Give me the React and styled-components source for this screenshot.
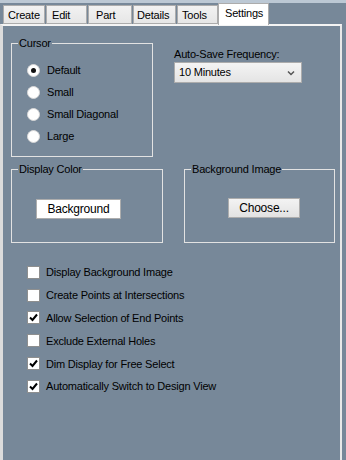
import styled, { createGlobalStyle } from "styled-components";

const GlobalStyle = createGlobalStyle`
  html, body {
    margin: 0;
    padding: 0;
    background: #778899;
    font-family: "Liberation Sans", Arial, sans-serif;
    font-size: 11px;
    letter-spacing: -0.2px;
    color: #000;
  }
`;

const Window = styled.div`
  width: 346px;
  height: 460px;
  overflow: hidden;
  border-top: 3px solid #bcc8d4;
  box-sizing: border-box;
  display: flex;
  flex-direction: column;
`;

const TabStrip = styled.div`
  display: flex;
  align-items: flex-end;
  height: 21px;
  padding-left: 3px;
  position: relative;
  z-index: 1;
`;

const Tab = styled.div`
  box-sizing: border-box;
  width: ${(p) => p.w}px;
  height: ${(p) => (p.active ? 22 : 19)}px;
  margin-right: ${(p) => p.gap ?? 1}px;
  margin-bottom: ${(p) => (p.active ? -1 : 0)}px;
  padding-left: ${(p) => p.pad}px;
  padding-top: 3px;
  border: 1px solid #acacac;
  border-bottom: ${(p) => (p.active ? "none" : "1px solid #acacac")};
  background: ${(p) =>
    p.active ? "#fff" : "linear-gradient(#f2f2f2, #e6e6e6)"};
  line-height: 13px;
  white-space: nowrap;
`;

const Panel = styled.div`
  flex: 1;
  width: 342px;
  box-sizing: border-box;
  border-left: 3px solid #dcdcdc;
  border-top: 2px solid #f4f4f4;
  border-right: 2px solid #e8e8e8;
  background: #778899;
  padding: 11px 0 0 8px;
`;

const TopRow = styled.div`
  display: flex;
  gap: 21px;
`;

const Group = styled.fieldset`
  box-sizing: border-box;
  width: ${(p) => p.w}px;
  height: ${(p) => p.h}px;
  margin: 0;
  padding: 0;
  border: 1px solid #e2e2e2;
  min-width: 0;
`;

const Legend = styled.legend`
  margin-left: 6px;
  padding: 0 1px;
  line-height: 13px;
`;

const RadioList = styled.div`
  display: flex;
  flex-direction: column;
  padding: 9px 0 0 15px;
`;

const RadioRow = styled.label`
  display: flex;
  align-items: center;
  height: 22px;
  gap: 7px;
`;

const RadioDot = styled.span`
  box-sizing: border-box;
  width: 13px;
  height: 13px;
  border-radius: 50%;
  background: #fff;
  border: 1px solid #d8d8d8;
  display: flex;
  align-items: center;
  justify-content: center;
  &::after {
    content: "";
    display: ${(p) => (p.checked ? "block" : "none")};
    width: 5px;
    height: 5px;
    border-radius: 50%;
    background: #111;
  }
`;

const SaveColumn = styled.div`
  display: flex;
  flex-direction: column;
  padding-top: 11px;
  gap: 1px;
  line-height: 13px;
`;

const Select = styled.div`
  box-sizing: border-box;
  width: 128px;
  height: 21px;
  border: 1px solid #acacac;
  background: linear-gradient(#f4f4f4, #e4e4e4);
  display: flex;
  align-items: center;
  justify-content: space-between;
  padding: 0 6px 0 4px;
`;

const BottomGroups = styled.div`
  display: flex;
  gap: 21px;
  margin-top: 6px;
`;

const GroupBody = styled.div`
  display: flex;
  padding: ${(p) => p.top}px 0 0 ${(p) => p.left}px;
`;

const Button = styled.div`
  box-sizing: border-box;
  width: ${(p) => p.w}px;
  height: 20px;
  border: 1px solid #adadad;
  background: ${(p) => (p.white ? "#fff" : "linear-gradient(#f3f3f3, #e2e2e2)")};
  display: flex;
  align-items: center;
  justify-content: center;
  font-size: 12px;
`;

const CheckList = styled.div`
  display: flex;
  flex-direction: column;
  padding: 18px 0 0 16px;
`;

const CheckRow = styled.label`
  display: flex;
  align-items: center;
  gap: 6px;
  height: 22.8px;
`;

const Box = styled.span`
  box-sizing: border-box;
  width: 13px;
  height: 13px;
  background: #fff;
  border: 1px solid #8e8f8f;
  display: flex;
  align-items: center;
  justify-content: center;
`;

const Check = () => (
  <svg width="9" height="9" viewBox="0 0 9 9">
    <path d="M1 4.5 L3.5 7 L8 1.5" fill="none" stroke="#000" strokeWidth="2" />
  </svg>
);

const Chevron = () => (
  <svg width="8" height="6" viewBox="0 0 8 6">
    <path d="M1 1.5 L4 4.5 L7 1.5" fill="none" stroke="#555" strokeWidth="1.5" />
  </svg>
);

const tabs = [
  { label: "Create", w: 42, pad: 4 },
  { label: "Edit", w: 41, pad: 5 },
  { label: "Part", w: 44, pad: 7 },
  { label: "Details", w: 43, pad: 3 },
  { label: "Tools", w: 41, pad: 4, gap: 0 },
  { label: "Settings", w: 51, pad: 6, active: true },
];

const cursors = ["Default", "Small", "Small Diagonal", "Large"];

const options = [
  { label: "Display Background Image", checked: false },
  { label: "Create Points at Intersections", checked: false },
  { label: "Allow Selection of End Points", checked: true },
  { label: "Exclude External Holes", checked: false },
  { label: "Dim Display for Free Select", checked: true },
  { label: "Automatically Switch to Design View", checked: true },
];

export default function App() {
  return (
    <>
      <GlobalStyle />
      <Window>
        <TabStrip>
          {tabs.map((t) => (
            <Tab key={t.label} w={t.w} pad={t.pad} gap={t.gap} active={t.active}>
              {t.label}
            </Tab>
          ))}
        </TabStrip>
        <Panel>
          <TopRow>
            <Group w={142} h={120}>
              <Legend>Cursor</Legend>
              <RadioList>
                {cursors.map((c, i) => (
                  <RadioRow key={c}>
                    <RadioDot checked={i === 0} />
                    {c}
                  </RadioRow>
                ))}
              </RadioList>
            </Group>
            <SaveColumn>
              <span>Auto-Save Frequency:</span>
              <Select>
                <span>10 Minutes</span>
                <Chevron />
              </Select>
            </SaveColumn>
          </TopRow>
          <BottomGroups>
            <Group w={152} h={80}>
              <Legend>Display Color</Legend>
              <GroupBody top={23} left={24}>
                <Button w={85} white>
                  Background
                </Button>
              </GroupBody>
            </Group>
            <Group w={151} h={80}>
              <Legend>Background Image</Legend>
              <GroupBody top={22} left={43}>
                <Button w={72}>Choose...</Button>
              </GroupBody>
            </Group>
          </BottomGroups>
          <CheckList>
            {options.map((o) => (
              <CheckRow key={o.label}>
                <Box>{o.checked && <Check />}</Box>
                {o.label}
              </CheckRow>
            ))}
          </CheckList>
        </Panel>
      </Window>
    </>
  );
}
